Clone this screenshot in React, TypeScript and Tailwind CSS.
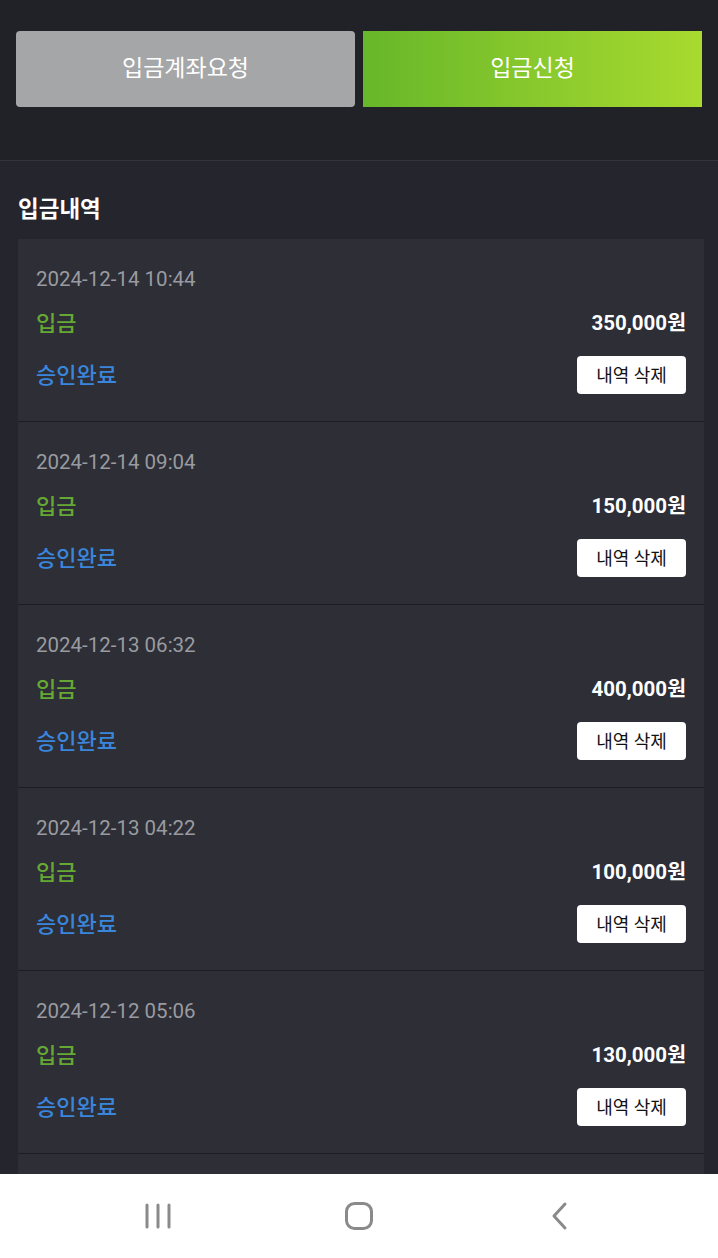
import React from 'react';

const deposits = [
  { date: '2024-12-14 10:44', amount: '350,000원' },
  { date: '2024-12-14 09:04', amount: '150,000원' },
  { date: '2024-12-13 06:32', amount: '400,000원' },
  { date: '2024-12-13 04:22', amount: '100,000원' },
  { date: '2024-12-12 05:06', amount: '130,000원' },
  { date: '2024-12-12 03:18', amount: '200,000원' },
];

const DepositCard = ({ date, amount }: { date: string; amount: string }) => {
  return <div className="bg-[#2d2e36] px-[18px] pt-[28px] pb-[27px] shadow-[0_1px_0_#1d1e23]">
      <div className="text-[20.5px] leading-[24px] text-[#9a9ba0]">{date}</div>
      <div className="flex justify-between items-center mt-[18px] h-[28px]">
        <span className="text-[22px] font-medium text-[#66a834]">입금</span>
        <span className="text-[20.5px] font-bold text-white">{amount}</span>
      </div>
      <div className="flex justify-between items-center mt-[19px] h-[38px]">
        <span className="text-[22px] font-medium text-[#3a86dc]">승인완료</span>
        <button className="w-[109px] h-[38px] rounded-[4px] bg-white text-[18px] text-[#111]">
          내역 삭제
        </button>
      </div>
    </div>;
};

const App = () => {
  return <div className="w-[718px] h-[1258px] flex flex-col overflow-hidden bg-[#212228]" style={{ fontFamily: "Roboto, 'Noto Sans CJK KR', sans-serif" }}>
      <div className="flex-1 overflow-hidden">
        {/* Top Buttons */}
        <div className="flex gap-2 px-4 pt-[31px] pb-[53px] border-b border-[#34353c]">
          <button className="flex-1 h-[76px] rounded-[4px] bg-[#a5a6a8] text-white text-[23px]">
            입금계좌요청
          </button>
          <button className="flex-1 h-[76px] bg-gradient-to-r from-[#66b72a] to-[#a8da2f] text-white text-[23px]">
            입금신청
          </button>
        </div>

        {/* History */}
        <div className="bg-[#24252d] pl-[18px] pr-[14px] pt-[33px] min-h-full">
          <h2 className="text-[22.5px] font-bold text-white leading-[30px] mb-[15px]">입금내역</h2>
          <div className="flex flex-col gap-[1px]">
            {deposits.map(item => <DepositCard key={item.date} date={item.date} amount={item.amount} />)}
          </div>
        </div>
      </div>

      {/* Bottom Nav */}
      <div className="h-[84px] bg-white flex items-center justify-center shrink-0">
        <div className="w-[201px] flex justify-center">
          <svg width="28" height="26" viewBox="0 0 28 26">
            <g stroke="#8a8a8a" strokeWidth="3" strokeLinecap="round">
              <line x1="3" y1="2" x2="3" y2="24" />
              <line x1="14" y1="2" x2="14" y2="24" />
              <line x1="25" y1="2" x2="25" y2="24" />
            </g>
          </svg>
        </div>
        <div className="w-[201px] flex justify-center">
          <svg width="30" height="30" viewBox="0 0 30 30">
            <rect x="2.5" y="2.5" width="25" height="25" rx="8" fill="none" stroke="#8a8a8a" strokeWidth="3" />
          </svg>
        </div>
        <div className="w-[201px] flex justify-center">
          <svg width="20" height="30" viewBox="0 0 20 30">
            <polyline points="15,3 4,15 15,27" fill="none" stroke="#8a8a8a" strokeWidth="3" strokeLinecap="round" strokeLinejoin="round" />
          </svg>
        </div>
      </div>
    </div>;
};

export default App;
